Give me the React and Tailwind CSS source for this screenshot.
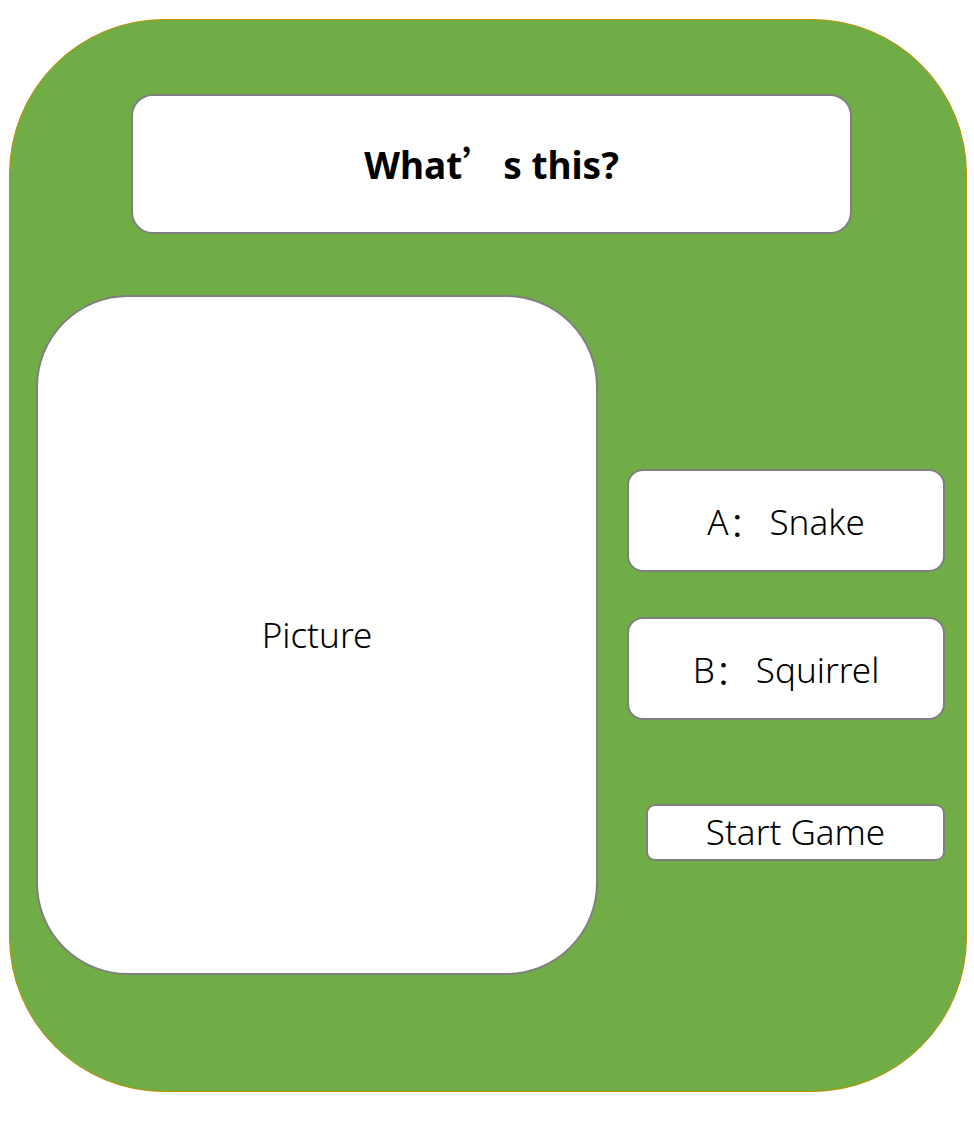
const font = { fontFamily: '"Noto Sans", "Noto Sans CJK SC", sans-serif' };
const cjk = { fontFamily: '"Noto Sans CJK SC", sans-serif' };

const Option = ({ letter, children }) => (
	<div className="flex h-[103px] w-[318px] items-center justify-center rounded-[16px] border-2 border-[#7f7f7f] bg-white pt-[4px] text-[35px] font-light text-black">
		{letter}
		<span style={cjk}>：</span>
		<span className="ml-[6px]">{children}</span>
	</div>
);

const App = () => {
	return (
		<div className="min-h-screen bg-white pt-[19px] pl-[9px]" style={font}>
			<div className="h-[1073px] w-[958px] rounded-[155px] border border-[#bf9000] bg-[#70ad47] pt-[74px]">
				{/* Title */}
				<div className="ml-[121px] flex h-[140px] w-[721px] items-center justify-center rounded-[22px] border-2 border-[#7f7f7f] bg-white">
					<h1 className="text-[37px] font-bold text-black">
						What<span style={cjk}>’</span>
						<span className="ml-[4px]">s this?</span>
					</h1>
				</div>

				<div className="mt-[61px] flex pl-[26px]">
					{/* Picture */}
					<div className="flex h-[680px] w-[562px] items-center justify-center rounded-[92px] border-2 border-[#7f7f7f] bg-white text-[35px] font-light text-black">
						Picture
					</div>

					{/* Answers */}
					<div className="ml-[29px] flex flex-col pt-[174px]">
						<Option letter="A">Snake</Option>
						<div className="mt-[45px]">
							<Option letter="B">Squirrel</Option>
						</div>
						<button className="mt-[84px] ml-[19px] flex h-[57px] w-[299px] items-center justify-center rounded-[9px] border-2 border-[#7f7f7f] bg-white text-[35px] font-light text-black">
							Start Game
						</button>
					</div>
				</div>
			</div>
		</div>
	);
};

export default App;
